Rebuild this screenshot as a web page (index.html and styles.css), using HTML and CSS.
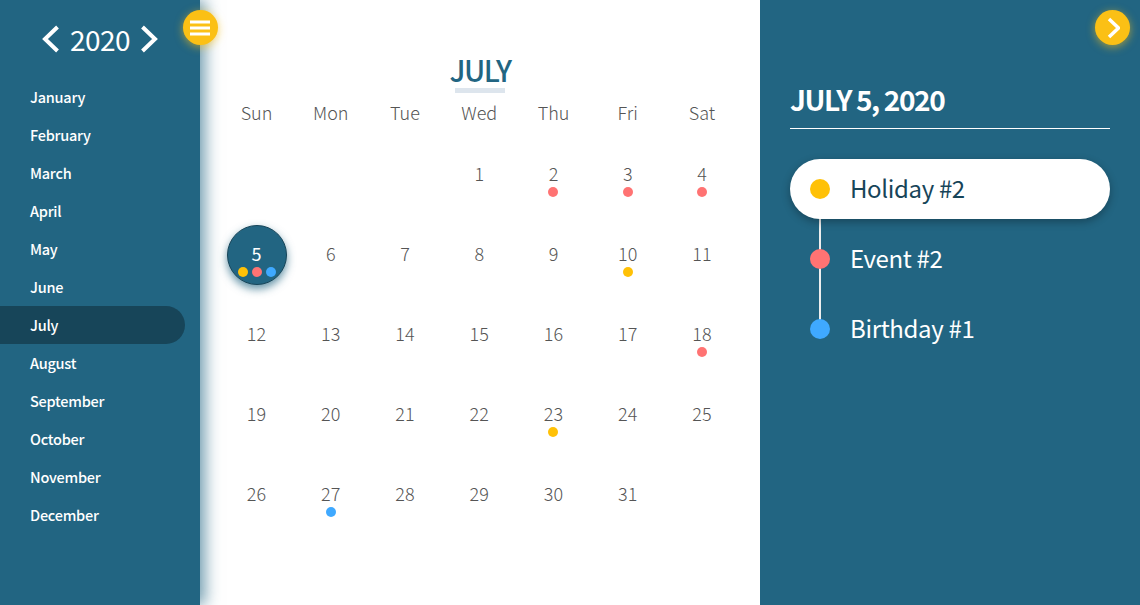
FILE: index.html
```html
<!DOCTYPE html>
<html>
<head>
	<meta charset="UTF-8">
	<title>Calendar</title>
	<link rel="stylesheet" href="styles.css">
</head>
<body>
	<div class="app">
		<aside class="months">
			<div class="year">
				<svg class="arrow" viewBox="0 0 20 30"><path d="M17.5 3 L5 15 L17.5 27"/></svg>
				<span>2020</span>
				<svg class="arrow" viewBox="0 0 20 30"><path d="M2.5 3 L15 15 L2.5 27"/></svg>
			</div>
			<ul class="month-list">
				<li>January</li>
				<li>February</li>
				<li>March</li>
				<li>April</li>
				<li>May</li>
				<li>June</li>
				<li class="active">July</li>
				<li>August</li>
				<li>September</li>
				<li>October</li>
				<li>November</li>
				<li>December</li>
			</ul>
			<button class="round-btn menu-btn" type="button">
				<svg viewBox="0 0 20 16"><path d="M0 2 H20 M0 8 H20 M0 14 H20"/></svg>
			</button>
		</aside>

		<main class="calendar">
			<h1 class="month-title">JULY</h1>
			<div class="week">
				<span>Sun</span><span>Mon</span><span>Tue</span><span>Wed</span><span>Thu</span><span>Fri</span><span>Sat</span>
			</div>
			<div class="days">
				<div class="day"></div>
				<div class="day"></div>
				<div class="day"></div>
				<div class="day">1</div>
				<div class="day">2<div class="dots"><i class="red"></i></div></div>
				<div class="day">3<div class="dots"><i class="red"></i></div></div>
				<div class="day">4<div class="dots"><i class="red"></i></div></div>
				<div class="day today">5<div class="dots"><i class="yellow"></i><i class="red"></i><i class="blue"></i></div></div>
				<div class="day">6</div>
				<div class="day">7</div>
				<div class="day">8</div>
				<div class="day">9</div>
				<div class="day">10<div class="dots"><i class="yellow"></i></div></div>
				<div class="day">11</div>
				<div class="day">12</div>
				<div class="day">13</div>
				<div class="day">14</div>
				<div class="day">15</div>
				<div class="day">16</div>
				<div class="day">17</div>
				<div class="day">18<div class="dots"><i class="red"></i></div></div>
				<div class="day">19</div>
				<div class="day">20</div>
				<div class="day">21</div>
				<div class="day">22</div>
				<div class="day">23<div class="dots"><i class="yellow"></i></div></div>
				<div class="day">24</div>
				<div class="day">25</div>
				<div class="day">26</div>
				<div class="day">27<div class="dots"><i class="blue"></i></div></div>
				<div class="day">28</div>
				<div class="day">29</div>
				<div class="day">30</div>
				<div class="day">31</div>
			</div>
		</main>

		<section class="events">
			<button class="round-btn close-btn" type="button">
				<svg viewBox="0 0 14 22"><path d="M3 2 L12.5 11 L3 20"/></svg>
			</button>
			<h2 class="event-date">JULY 5, 2020</h2>
			<ul class="event-list">
				<li class="selected"><i class="yellow"></i><span>Holiday #2</span></li>
				<li><i class="red"></i><span>Event #2</span></li>
				<li><i class="blue"></i><span>Birthday #1</span></li>
			</ul>
		</section>
	</div>
</body>
</html>
```

FILE: styles.css
```css
* {
	box-sizing: border-box;
}
html, body {
	height: 100%;
}
body {
	margin: 0;
	font-family: "Noto Sans CJK SC", "Open Sans", sans-serif;
	color: #fff;
	overflow: hidden;
}
ul {
	list-style: none;
	margin: 0;
	padding: 0;
}
.app {
	display: flex;
	height: 100%;
}
.yellow {
	background: #ffc107;
}
.red {
	background: #ff7373;
}
.blue {
	background: #3fa9ff;
}

/* left column */
.months {
	position: relative;
	z-index: 2;
	flex: 0 0 200px;
	background: #226582;
	box-shadow: 5px 0 15px rgba(34, 101, 130, .65);
}
.year {
	display: flex;
	align-items: center;
	justify-content: center;
	gap: 10px;
	height: 78px;
	font-size: 28px;
	line-height: 1;
	letter-spacing: -.5px;
}
.arrow {
	width: 20px;
	height: 30px;
	fill: none;
	stroke: #fff;
	stroke-width: 4;
}
.month-list li {
	height: 38px;
	line-height: 38px;
	width: 185px;
	padding-left: 30px;
	font-size: 14.5px;
	font-weight: 500;
	letter-spacing: -.25px;
	border-radius: 0 19px 19px 0;
}
.month-list .active {
	background: #174559;
}
.round-btn {
	position: absolute;
	top: 10px;
	width: 35px;
	height: 35px;
	padding: 0;
	border: 0;
	border-radius: 50%;
	background: #fbc015;
	box-shadow: 0 2px 8px rgba(251, 192, 21, .6);
	display: flex;
	align-items: center;
	justify-content: center;
}
.round-btn svg {
	fill: none;
	stroke: #fff;
}
.menu-btn {
	left: 182.5px;
}
.menu-btn svg {
	width: 20px;
	height: 16px;
	stroke-width: 3;
}
.close-btn {
	right: 10px;
}
.close-btn svg {
	width: 14px;
	height: 22px;
	stroke-width: 3.5;
}

/* calendar */
.calendar {
	flex: 0 0 560px;
	background: #fff;
	color: #555;
}
.month-title {
	width: 50px;
	height: 93px;
	margin: 0 auto;
	padding-top: 51px;
	border-bottom: 5px solid #dde5ed;
	color: #226582;
	font-size: 29px;
	font-weight: 500;
	line-height: 36px;
	letter-spacing: -1.4px;
	white-space: nowrap;
	display: flex;
	justify-content: center;
}
.week {
	display: grid;
	grid-template-columns: repeat(7, 1fr);
	height: 52px;
	padding: 8px 20.9px 0 19.4px;
	font-size: 18px;
	font-weight: 300;
	line-height: 22px;
	text-align: center;
}
.days {
	display: grid;
	grid-template-columns: repeat(7, 1fr);
	grid-auto-rows: 60px;
	row-gap: 20px;
	padding: 0 20.9px 0 19.4px;
	font-size: 18px;
	font-weight: 300;
	text-align: center;
}
.day {
	position: relative;
	width: 60px;
	height: 60px;
	margin: 0 auto;
	line-height: 56px;
	border-radius: 50%;
}
.today {
	background: #226582;
	border: 1px solid #174559;
	font-weight: 400;
	line-height: 54px;
	color: #fff;
	box-shadow: 0 4px 8px rgba(34, 101, 130, .7);
}
.dots {
	position: absolute;
	left: 0;
	right: 0;
	top: 42px;
	display: flex;
	justify-content: center;
	gap: 4px;
}
.today .dots {
	top: 41px;
}
.dots i {
	width: 10px;
	height: 10px;
	border-radius: 50%;
}

/* right column */
.events {
	position: relative;
	flex: 1;
	padding: 0 30px;
	background: #226582;
}
.event-date {
	height: 129px;
	margin: 0 0 30px;
	padding-top: 81px;
	border-bottom: 1px solid #fff;
	font-size: 28px;
	font-weight: 700;
	line-height: 36px;
	letter-spacing: -1.4px;
}
.event-list {
	position: relative;
}
.event-list::before {
	content: "";
	position: absolute;
	left: 29px;
	top: 30px;
	width: 2px;
	height: 140px;
	background: #eee;
}
.event-list li {
	position: relative;
	display: flex;
	align-items: center;
	gap: 20px;
	height: 60px;
	margin-bottom: 10px;
	padding-left: 20px;
	font-size: 24px;
	line-height: 60px;
	letter-spacing: -.35px;
	border-radius: 30px;
}
.event-list span {
	margin-bottom: 2px;
}
.event-list i {
	width: 20px;
	height: 20px;
	border-radius: 50%;
}
.event-list .selected {
	background: #fff;
	color: #174559;
	box-shadow: 0 3px 8px rgba(0, 0, 0, .3);
}
```
